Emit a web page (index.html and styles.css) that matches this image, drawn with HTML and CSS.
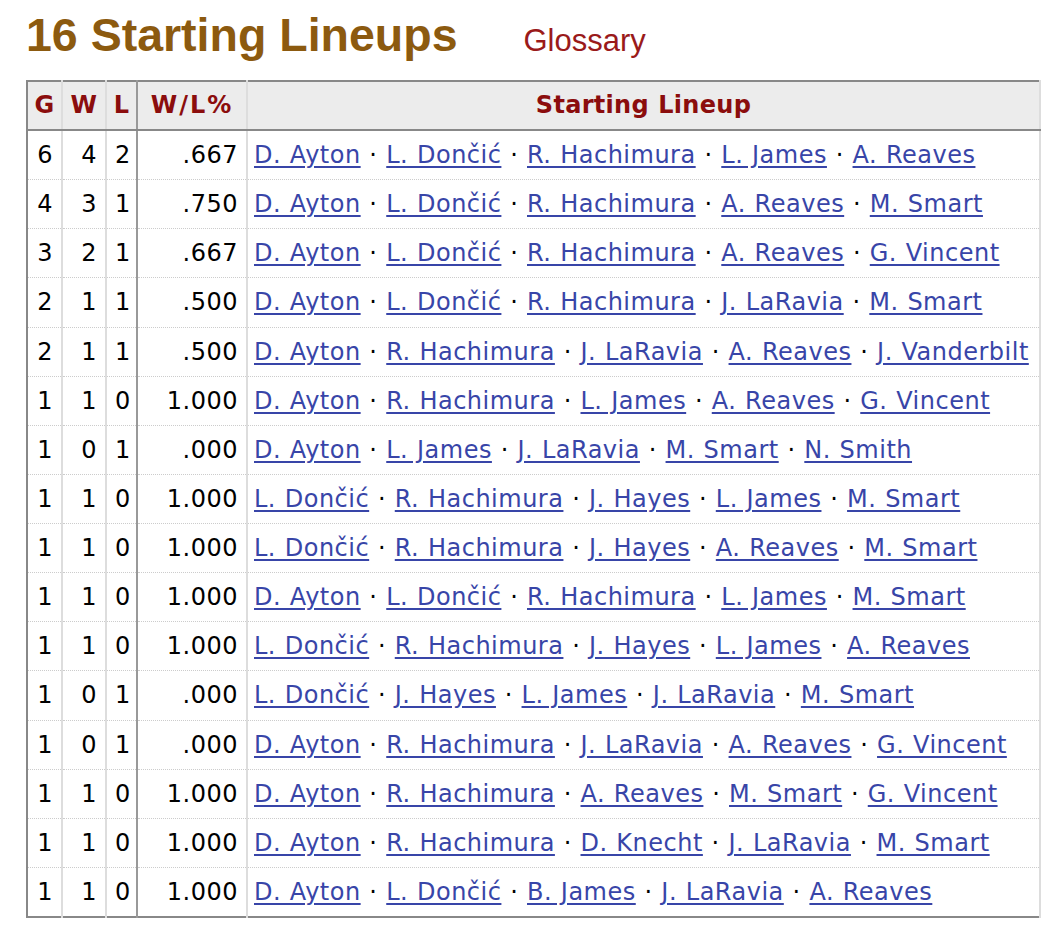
FILE: index.html
```html
<!DOCTYPE html>
<html>
<head>
<meta charset="utf-8">
<link rel="stylesheet" href="styles.css">
</head>
<body>
<div class="section-heading">
  <h2>16 Starting Lineups</h2>
  <a class="glossary" href="#">Glossary</a>
</div>
<table class="stats">
  <colgroup>
    <col class="c-g"><col class="c-w"><col class="c-l"><col class="c-pct"><col class="c-lineup">
  </colgroup>
  <thead>
    <tr><th>G</th><th>W</th><th class="sep">L</th><th class="pct">W/L%</th><th>Starting Lineup</th></tr>
  </thead>
  <tbody>
    <tr><td>6</td><td>4</td><td class="sep">2</td><td>.667</td><td class="lineup"><a href="#">D. Ayton</a> · <a href="#">L. Dončić</a> · <a href="#">R. Hachimura</a> · <a href="#">L. James</a> · <a href="#">A. Reaves</a></td></tr>
    <tr><td>4</td><td>3</td><td class="sep">1</td><td>.750</td><td class="lineup"><a href="#">D. Ayton</a> · <a href="#">L. Dončić</a> · <a href="#">R. Hachimura</a> · <a href="#">A. Reaves</a> · <a href="#">M. Smart</a></td></tr>
    <tr><td>3</td><td>2</td><td class="sep">1</td><td>.667</td><td class="lineup"><a href="#">D. Ayton</a> · <a href="#">L. Dončić</a> · <a href="#">R. Hachimura</a> · <a href="#">A. Reaves</a> · <a href="#">G. Vincent</a></td></tr>
    <tr><td>2</td><td>1</td><td class="sep">1</td><td>.500</td><td class="lineup"><a href="#">D. Ayton</a> · <a href="#">L. Dončić</a> · <a href="#">R. Hachimura</a> · <a href="#">J. LaRavia</a> · <a href="#">M. Smart</a></td></tr>
    <tr><td>2</td><td>1</td><td class="sep">1</td><td>.500</td><td class="lineup"><a href="#">D. Ayton</a> · <a href="#">R. Hachimura</a> · <a href="#">J. LaRavia</a> · <a href="#">A. Reaves</a> · <a href="#">J. Vanderbilt</a></td></tr>
    <tr><td>1</td><td>1</td><td class="sep">0</td><td>1.000</td><td class="lineup"><a href="#">D. Ayton</a> · <a href="#">R. Hachimura</a> · <a href="#">L. James</a> · <a href="#">A. Reaves</a> · <a href="#">G. Vincent</a></td></tr>
    <tr><td>1</td><td>0</td><td class="sep">1</td><td>.000</td><td class="lineup"><a href="#">D. Ayton</a> · <a href="#">L. James</a> · <a href="#">J. LaRavia</a> · <a href="#">M. Smart</a> · <a href="#">N. Smith</a></td></tr>
    <tr><td>1</td><td>1</td><td class="sep">0</td><td>1.000</td><td class="lineup"><a href="#">L. Dončić</a> · <a href="#">R. Hachimura</a> · <a href="#">J. Hayes</a> · <a href="#">L. James</a> · <a href="#">M. Smart</a></td></tr>
    <tr><td>1</td><td>1</td><td class="sep">0</td><td>1.000</td><td class="lineup"><a href="#">L. Dončić</a> · <a href="#">R. Hachimura</a> · <a href="#">J. Hayes</a> · <a href="#">A. Reaves</a> · <a href="#">M. Smart</a></td></tr>
    <tr><td>1</td><td>1</td><td class="sep">0</td><td>1.000</td><td class="lineup"><a href="#">D. Ayton</a> · <a href="#">L. Dončić</a> · <a href="#">R. Hachimura</a> · <a href="#">L. James</a> · <a href="#">M. Smart</a></td></tr>
    <tr><td>1</td><td>1</td><td class="sep">0</td><td>1.000</td><td class="lineup"><a href="#">L. Dončić</a> · <a href="#">R. Hachimura</a> · <a href="#">J. Hayes</a> · <a href="#">L. James</a> · <a href="#">A. Reaves</a></td></tr>
    <tr><td>1</td><td>0</td><td class="sep">1</td><td>.000</td><td class="lineup"><a href="#">L. Dončić</a> · <a href="#">J. Hayes</a> · <a href="#">L. James</a> · <a href="#">J. LaRavia</a> · <a href="#">M. Smart</a></td></tr>
    <tr><td>1</td><td>0</td><td class="sep">1</td><td>.000</td><td class="lineup"><a href="#">D. Ayton</a> · <a href="#">R. Hachimura</a> · <a href="#">J. LaRavia</a> · <a href="#">A. Reaves</a> · <a href="#">G. Vincent</a></td></tr>
    <tr><td>1</td><td>1</td><td class="sep">0</td><td>1.000</td><td class="lineup"><a href="#">D. Ayton</a> · <a href="#">R. Hachimura</a> · <a href="#">A. Reaves</a> · <a href="#">M. Smart</a> · <a href="#">G. Vincent</a></td></tr>
    <tr><td>1</td><td>1</td><td class="sep">0</td><td>1.000</td><td class="lineup"><a href="#">D. Ayton</a> · <a href="#">R. Hachimura</a> · <a href="#">D. Knecht</a> · <a href="#">J. LaRavia</a> · <a href="#">M. Smart</a></td></tr>
    <tr><td>1</td><td>1</td><td class="sep">0</td><td>1.000</td><td class="lineup"><a href="#">D. Ayton</a> · <a href="#">L. Dončić</a> · <a href="#">B. James</a> · <a href="#">J. LaRavia</a> · <a href="#">A. Reaves</a></td></tr>
  </tbody>
</table>
</body>
</html>
```

FILE: styles.css
```css
body {
  margin: 0;
  padding: 9px 20px 0 26px;
  background: #fff;
  font-family: "DejaVu Sans", Verdana, sans-serif;
}
.section-heading {
  display: flex;
  align-items: baseline;
  gap: 66px;
  height: 71px;
}
.section-heading h2 {
  margin: 0;
  font-family: "Liberation Sans", Arial, sans-serif;
  font-weight: bold;
  font-size: 46.5px;
  line-height: 52px;
  color: #8c5a0f;
}
.glossary {
  font-family: "Liberation Sans", Arial, sans-serif;
  font-size: 31px;
  color: #9a1a1a;
  text-decoration: none;
}
.stats {
  border-collapse: collapse;
  table-layout: fixed;
  width: 1015px;
  border: 2px solid #888;
  font-size: 24px;
  letter-spacing: 0.5px;
  word-spacing: 0.6px;
  color: #000;
}
.c-g { width: 35px; }
.c-w { width: 44px; }
.c-l { width: 31px; }
.c-pct { width: 110px; }
.stats th {
  background: #ececec;
  color: #8b0d0d;
  font-weight: bold;
  font-size: 24px;
  letter-spacing: 0.3px;
  line-height: 31px;
  padding: 8px 2px 8px;
  border-bottom: 2px solid #888;
  border-right: 2px solid #ddd;
  text-align: center;
  white-space: nowrap;
}
.stats th.pct { letter-spacing: 2px; }
.stats td {
  line-height: 30.13px;
  padding: 9px 8px;
  text-align: right;
  border-right: 2px solid #ddd;
  border-bottom: 1px dotted #ccc;
  white-space: nowrap;
}
.stats th.sep, .stats td.sep { border-right: 2px solid #999; }
.stats td.lineup { text-align: left; padding-left: 6px; }
.stats a { color: #3845a8; text-decoration: underline; text-underline-offset: 3px; }
```
